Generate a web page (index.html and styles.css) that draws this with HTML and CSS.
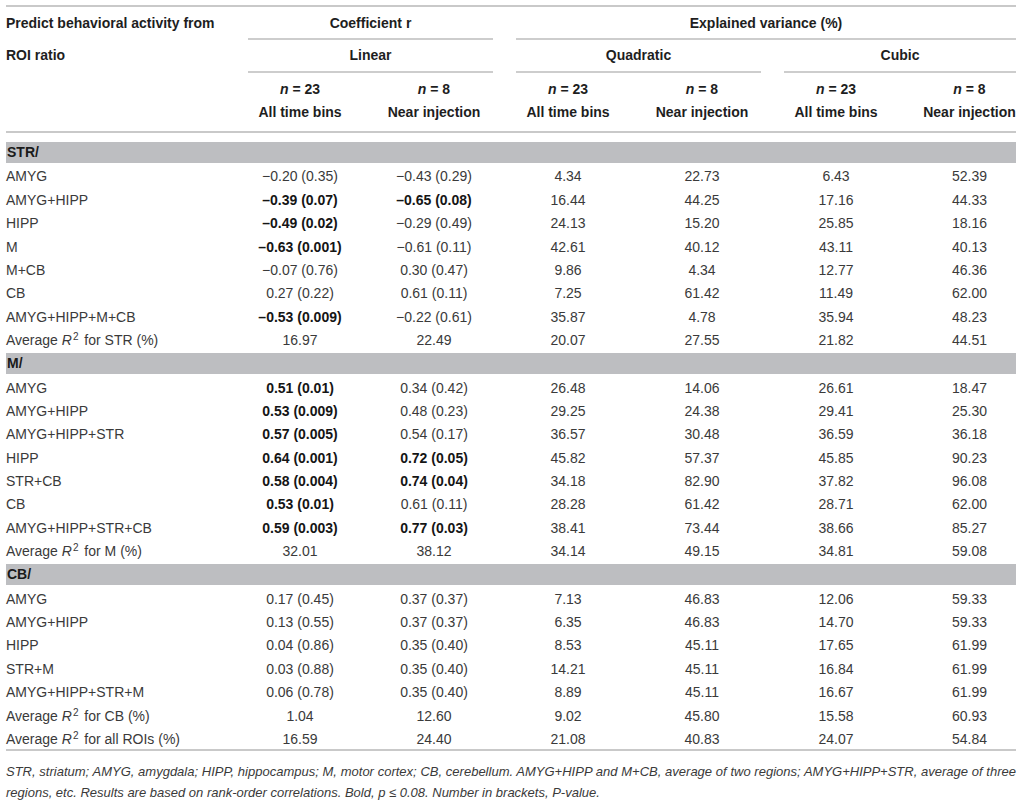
FILE: index.html
```html
<!DOCTYPE html>
<html lang="en">
<head>
<meta charset="utf-8">
<title>Predict behavioral activity from ROI ratio</title>
<link rel="stylesheet" href="styles.css">
</head>
<body>
<div class="wrap">
<table class="tbl">
  <colgroup>
    <col class="c0"><col class="cn"><col class="cn"><col class="cn"><col class="cn"><col class="cn"><col class="cl">
  </colgroup>
  <thead>
    <tr class="h1">
      <th class="lab">Predict behavioral activity from</th>
      <th colspan="2" class="grp"><div class="ln">Coefficient r</div></th>
      <th colspan="4" class="grp end"><div class="ln">Explained variance (%)</div></th>
    </tr>
    <tr class="h2">
      <th class="lab">ROI ratio</th>
      <th colspan="2" class="grp"><div class="ln">Linear</div></th>
      <th colspan="2" class="grp"><div class="ln">Quadratic</div></th>
      <th colspan="2" class="grp end"><div class="ln">Cubic</div></th>
    </tr>
    <tr class="h3">
      <th class="lab"></th>
      <th><i>n</i> = 23<br>All time bins</th>
      <th><i>n</i> = 8<br>Near injection</th>
      <th><i>n</i> = 23<br>All time bins</th>
      <th><i>n</i> = 8<br>Near injection</th>
      <th><i>n</i> = 23<br>All time bins</th>
      <th class="lastc"><i>n</i> = 8<br>Near injection</th>
    </tr>
  </thead>
  <tbody>
    <tr class="sec first"><td colspan="7"><div>STR/</div></td></tr>
    <tr><td>AMYG</td><td>−0.20 (0.35)</td><td>−0.43 (0.29)</td><td>4.34</td><td>22.73</td><td>6.43</td><td>52.39</td></tr>
    <tr><td>AMYG+HIPP</td><td><b>–0.39 (0.07)</b></td><td><b>–0.65 (0.08)</b></td><td>16.44</td><td>44.25</td><td>17.16</td><td>44.33</td></tr>
    <tr><td>HIPP</td><td><b>–0.49 (0.02)</b></td><td>−0.29 (0.49)</td><td>24.13</td><td>15.20</td><td>25.85</td><td>18.16</td></tr>
    <tr><td>M</td><td><b>–0.63 (0.001)</b></td><td>−0.61 (0.11)</td><td>42.61</td><td>40.12</td><td>43.11</td><td>40.13</td></tr>
    <tr><td>M+CB</td><td>−0.07 (0.76)</td><td>0.30 (0.47)</td><td>9.86</td><td>4.34</td><td>12.77</td><td>46.36</td></tr>
    <tr><td>CB</td><td>0.27 (0.22)</td><td>0.61 (0.11)</td><td>7.25</td><td>61.42</td><td>11.49</td><td>62.00</td></tr>
    <tr><td>AMYG+HIPP+M+CB</td><td><b>–0.53 (0.009)</b></td><td>−0.22 (0.61)</td><td>35.87</td><td>4.78</td><td>35.94</td><td>48.23</td></tr>
    <tr><td>Average <i>R</i><sup>2</sup> for STR (%)</td><td>16.97</td><td>22.49</td><td>20.07</td><td>27.55</td><td>21.82</td><td>44.51</td></tr>

    <tr class="sec"><td colspan="7"><div>M/</div></td></tr>
    <tr><td>AMYG</td><td><b>0.51 (0.01)</b></td><td>0.34 (0.42)</td><td>26.48</td><td>14.06</td><td>26.61</td><td>18.47</td></tr>
    <tr><td>AMYG+HIPP</td><td><b>0.53 (0.009)</b></td><td>0.48 (0.23)</td><td>29.25</td><td>24.38</td><td>29.41</td><td>25.30</td></tr>
    <tr><td>AMYG+HIPP+STR</td><td><b>0.57 (0.005)</b></td><td>0.54 (0.17)</td><td>36.57</td><td>30.48</td><td>36.59</td><td>36.18</td></tr>
    <tr><td>HIPP</td><td><b>0.64 (0.001)</b></td><td><b>0.72 (0.05)</b></td><td>45.82</td><td>57.37</td><td>45.85</td><td>90.23</td></tr>
    <tr><td>STR+CB</td><td><b>0.58 (0.004)</b></td><td><b>0.74 (0.04)</b></td><td>34.18</td><td>82.90</td><td>37.82</td><td>96.08</td></tr>
    <tr><td>CB</td><td><b>0.53 (0.01)</b></td><td>0.61 (0.11)</td><td>28.28</td><td>61.42</td><td>28.71</td><td>62.00</td></tr>
    <tr><td>AMYG+HIPP+STR+CB</td><td><b>0.59 (0.003)</b></td><td><b>0.77 (0.03)</b></td><td>38.41</td><td>73.44</td><td>38.66</td><td>85.27</td></tr>
    <tr><td>Average <i>R</i><sup>2</sup> for M (%)</td><td>32.01</td><td>38.12</td><td>34.14</td><td>49.15</td><td>34.81</td><td>59.08</td></tr>

    <tr class="sec"><td colspan="7"><div>CB/</div></td></tr>
    <tr><td>AMYG</td><td>0.17 (0.45)</td><td>0.37 (0.37)</td><td>7.13</td><td>46.83</td><td>12.06</td><td>59.33</td></tr>
    <tr><td>AMYG+HIPP</td><td>0.13 (0.55)</td><td>0.37 (0.37)</td><td>6.35</td><td>46.83</td><td>14.70</td><td>59.33</td></tr>
    <tr><td>HIPP</td><td>0.04 (0.86)</td><td>0.35 (0.40)</td><td>8.53</td><td>45.11</td><td>17.65</td><td>61.99</td></tr>
    <tr><td>STR+M</td><td>0.03 (0.88)</td><td>0.35 (0.40)</td><td>14.21</td><td>45.11</td><td>16.84</td><td>61.99</td></tr>
    <tr><td>AMYG+HIPP+STR+M</td><td>0.06 (0.78)</td><td>0.35 (0.40)</td><td>8.89</td><td>45.11</td><td>16.67</td><td>61.99</td></tr>
    <tr><td>Average <i>R</i><sup>2</sup> for CB (%)</td><td>1.04</td><td>12.60</td><td>9.02</td><td>45.80</td><td>15.58</td><td>60.93</td></tr>
    <tr class="lastrow"><td>Average <i>R</i><sup>2</sup> for all ROIs (%)</td><td>16.59</td><td>24.40</td><td>21.08</td><td>40.83</td><td>24.07</td><td>54.84</td></tr>
  </tbody>
</table>
<div class="note">
  <p class="l1">STR, striatum; AMYG, amygdala; HIPP, hippocampus; M, motor cortex; CB, cerebellum. AMYG+HIPP and M+CB, average of two regions; AMYG+HIPP+STR, average of three</p>
  <p class="l2">regions, etc. Results are based on rank-order correlations. Bold, p ≤ 0.08. Number in brackets, P-value.</p>
</div>
</div>
</body>
</html>
```
FILE: styles.css
```css
html, body {
  margin: 0;
  padding: 0;
  background: #fff;
}
body {
  font-family: "Liberation Sans", Arial, Helvetica, sans-serif;
  font-size: 14px;
  color: #3a3a3a;
}
.wrap {
  padding: 5px 0 0 6px;
  width: 1010px;
}
.tbl {
  width: 1010px;
  table-layout: fixed;
  border-collapse: separate;
  border-spacing: 0;
}
.c0 { width: 227px; }
.cn { width: 134px; }
.cl { width: 113px; }

.tbl th {
  font-weight: bold;
  color: #1e1e1e;
  padding: 0;
  vertical-align: top;
}
.tbl th.lab { text-align: left; }

.h1 th {
  border-top: 2px solid #c9c9c9;
}
.h1 th.lab { padding-top: 8px; line-height: 16px; }
.h2 th.lab { padding-top: 7px; line-height: 16px; }

.grp {
  padding: 0 8px 0 15px !important;
  text-align: center;
}
.grp.end { padding-right: 0 !important; }
.h1 .ln {
  padding: 8px 0 7px;
  line-height: 16px;
  border-bottom: 2px solid #cdcdcd;
}
.h2 .ln {
  padding: 7px 0 8px;
  line-height: 16px;
  border-bottom: 2px solid #cdcdcd;
}

.h3 th {
  padding: 4.5px 0 7.5px !important;
  line-height: 23px;
  text-align: center;
  border-bottom: 2px solid #c9c9c9;
}
.h3 th.lastc, .tbl td:last-child { padding-left: 20px !important; }

.sec td {
  padding: 3px 0 0 !important;
  text-align: left !important;
}
.sec.first td { padding-top: 9px !important; }
.sec div {
  background: #bdbec1;
  height: 21px;
  line-height: 21px;
  font-weight: bold;
  color: #1a1a1a;
  padding-left: 1px;
}

.tbl td {
  padding: 3.4px 0 0;
  line-height: 20px;
  text-align: center;
  white-space: nowrap;
}
.tbl td:first-child {
  text-align: left;
  padding-left: 0 !important;
}
.tbl td b { color: #151515; }
.tbl sup {
  font-size: 10px;
  line-height: 0;
  vertical-align: 5px;
  margin-left: 1px;
  margin-right: 2px;
}
.lastrow td { border-bottom: 2px solid #c9c9c9; }

.note {
  margin-top: 10px;
  font-style: italic;
  font-size: 13px;
  line-height: 21px;
  color: #3a3a3a;
}
.note p { margin: 0; }
.note .l1 {
  text-align: justify;
  text-align-last: justify;
  white-space: nowrap;
}
.note .l2 { text-align: left; }
```
